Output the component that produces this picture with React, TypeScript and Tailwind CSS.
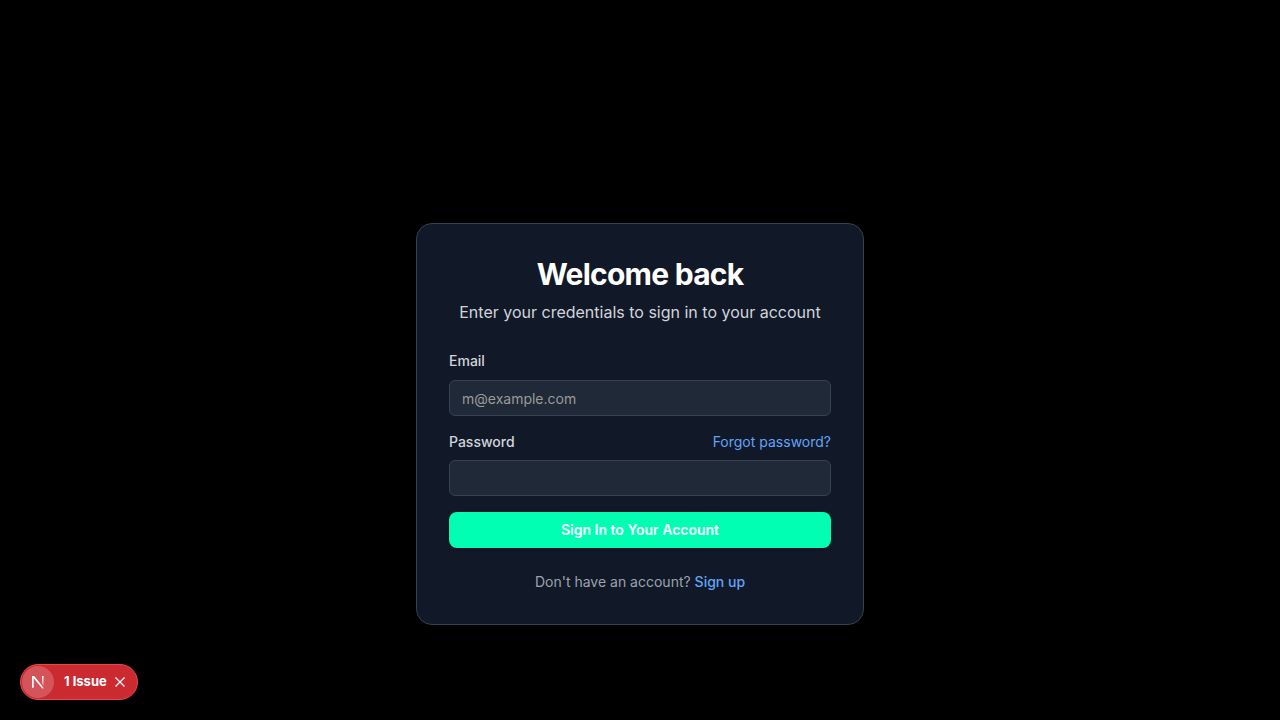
import React from "react";

const fieldClass =
  "h-9 w-full rounded-md border border-[#374151] bg-[#1f2937] px-3 text-sm text-white placeholder:text-[#9a9a9a] outline-none";

function NextLogo() {
  return (
    <svg width="32" height="32" viewBox="0 0 32 32" fill="none" aria-hidden="true">
      <defs>
        <linearGradient id="diag" x1="17" y1="18" x2="22" y2="24" gradientUnits="userSpaceOnUse">
          <stop stopColor="white" />
          <stop offset="0.6" stopColor="white" stopOpacity="0.8" />
          <stop offset="1" stopColor="white" stopOpacity="0" />
        </linearGradient>
        <linearGradient id="bar" x1="21" y1="10" x2="21" y2="21" gradientUnits="userSpaceOnUse">
          <stop stopColor="white" />
          <stop offset="1" stopColor="white" stopOpacity="0.2" />
        </linearGradient>
      </defs>
      <path d="M10 10H12.2L22 22.2L20.6 23L11.7 12.2V21.7H10Z" fill="url(#diag)" />
      <path d="M20 10H21.6V20L20 18Z" fill="url(#bar)" />
    </svg>
  );
}

function IssueBadge() {
  return (
    <div className="fixed bottom-5 left-5 flex h-9 items-center rounded-full border border-[#e5484d] bg-[#ca2a30] pr-[7px] text-white">
      <button type="button" aria-label="Open dev tools" className="ml-px flex size-8 items-center justify-center rounded-full bg-white/20">
        <NextLogo />
      </button>
      <button type="button" className="ml-2.5 text-[13px] font-bold">
        1 Issue
      </button>
      <button type="button" aria-label="Dismiss" className="ml-[3px] flex size-5 items-center justify-center">
        <svg width="12" height="12" viewBox="0 0 12 12" fill="none" stroke="white" strokeWidth="1.2" aria-hidden="true">
          <path d="M1.5 1.5L10.5 10.5M10.5 1.5L1.5 10.5" />
        </svg>
      </button>
    </div>
  );
}

export default function App() {
  return (
    <div className="flex min-h-screen flex-col items-center justify-center bg-black px-4 pt-32 font-['Inter',sans-serif]">
      <main className="w-full max-w-md rounded-2xl border border-[#374151] bg-[#111827] p-8">
        <header className="mb-6 space-y-2 text-center">
          <h1 className="text-3xl font-bold tracking-tight text-white">Welcome back</h1>
          <p className="text-base text-[#d1d5db]">Enter your credentials to sign in to your account</p>
        </header>
        <form className="space-y-4" onSubmit={(e) => e.preventDefault()}>
          <div className="space-y-2">
            <div>
              <label htmlFor="email" className="text-sm font-medium text-[#d1d5db]">Email</label>
            </div>
            <input id="email" type="email" placeholder="m@example.com" className={fieldClass} />
          </div>
          <div className="space-y-2">
            <div className="flex items-center justify-between text-sm">
              <label htmlFor="password" className="font-medium text-[#d1d5db]">Password</label>
              <a href="#forgot" className="text-[#60a5fa]">Forgot password?</a>
            </div>
            <input id="password" type="password" className={fieldClass} />
          </div>
          <button type="submit" className="h-9 w-full rounded-lg bg-[#00ffb2] text-sm font-semibold text-white shadow-sm">
            Sign In to Your Account
          </button>
        </form>
        <p className="mt-6 text-center text-sm text-[#9ca3af]">
          Don't have an account? <a href="#signup" className="font-medium text-[#60a5fa]">Sign up</a>
        </p>
      </main>
      <IssueBadge />
    </div>
  );
}
